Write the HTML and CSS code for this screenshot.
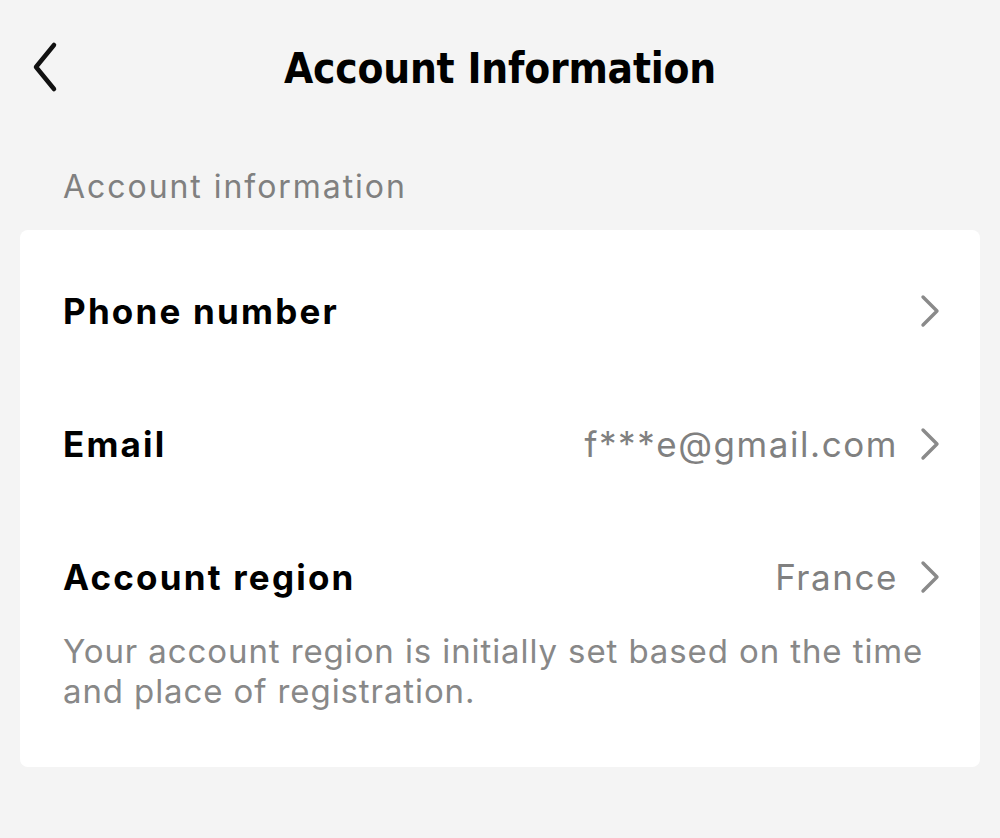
FILE: index.html
```html
<!DOCTYPE html>
<html>
<head>
<meta charset="utf-8">
<link rel="stylesheet" href="styles.css">
</head>
<body>
<div class="page">
  <header class="topbar">
    <div class="back">
      <svg width="30" height="54" viewBox="0 0 30 54"><path d="M24 5 L6 27 L24 49" fill="none" stroke="#111" stroke-width="4.5" stroke-linecap="round" stroke-linejoin="round"/></svg>
    </div>
    <h1 class="title">Account Information</h1>
  </header>
  <div class="section-label">Account information</div>
  <div class="card">
    <div class="row">
      <span class="row-label">Phone number</span>
      <span class="row-right">
        <svg class="chev" width="20" height="36" viewBox="0 0 20 36"><path d="M3 4 L17 18 L3 32" fill="none" stroke="#8a8a8a" stroke-width="3.4" stroke-linecap="round" stroke-linejoin="round"/></svg>
      </span>
    </div>
    <div class="row">
      <span class="row-label">Email</span>
      <span class="row-right">
        <span class="row-value">f***e@gmail.com</span>
        <svg class="chev" width="20" height="36" viewBox="0 0 20 36"><path d="M3 4 L17 18 L3 32" fill="none" stroke="#8a8a8a" stroke-width="3.4" stroke-linecap="round" stroke-linejoin="round"/></svg>
      </span>
    </div>
    <div class="row">
      <span class="row-label">Account region</span>
      <span class="row-right">
        <span class="row-value">France</span>
        <svg class="chev" width="20" height="36" viewBox="0 0 20 36"><path d="M3 4 L17 18 L3 32" fill="none" stroke="#8a8a8a" stroke-width="3.4" stroke-linecap="round" stroke-linejoin="round"/></svg>
      </span>
    </div>
    <p class="note">Your account region is initially set based on the time and place of registration.</p>
  </div>
</div>
</body>
</html>
```
FILE: styles.css
```css
html, body {
  margin: 0;
  padding: 0;
  background: #f4f4f4;
}
body {
  font-family: Inter, "Liberation Sans", Arial, sans-serif;
  width: 1000px;
  height: 838px;
  overflow: hidden;
}
.page {
  display: flex;
  flex-direction: column;
}
.topbar {
  height: 136px;
  display: flex;
  align-items: center;
  justify-content: center;
  position: relative;
}
.back {
  position: absolute;
  left: 30px;
  top: 40px;
  display: flex;
}
.title {
  margin: 0;
  font-size: 42px;
  line-height: 49px;
  font-weight: 700;
  color: #000;
  letter-spacing: -0.2px;
  font-family: "DejaVu Sans Condensed", "Liberation Sans", sans-serif;
}
.section-label {
  height: 63px;
  padding: 31px 0 0 63px;
  font-size: 32px;
  line-height: 40px;
  letter-spacing: 1.95px;
  color: #808080;
}
.card {
  margin: 0 20px;
  background: #fff;
  border-radius: 8px;
  padding: 14px 40px 56px 43px;
}
.row {
  height: 133px;
  display: flex;
  align-items: center;
  justify-content: space-between;
}
.row-label {
  font-size: 35px;
  font-weight: 650;
  letter-spacing: 2.2px;
  color: #000;
}
.row-right {
  display: flex;
  align-items: center;
  gap: 22px;
}
.chev {
  display: block;
}
.row-value {
  font-size: 35px;
  letter-spacing: 1.55px;
  color: #808080;
}
.note {
  margin: -12px 0 0 0;
  font-size: 33px;
  line-height: 40px;
  letter-spacing: 0.9px;
  color: #888888;
}
```
